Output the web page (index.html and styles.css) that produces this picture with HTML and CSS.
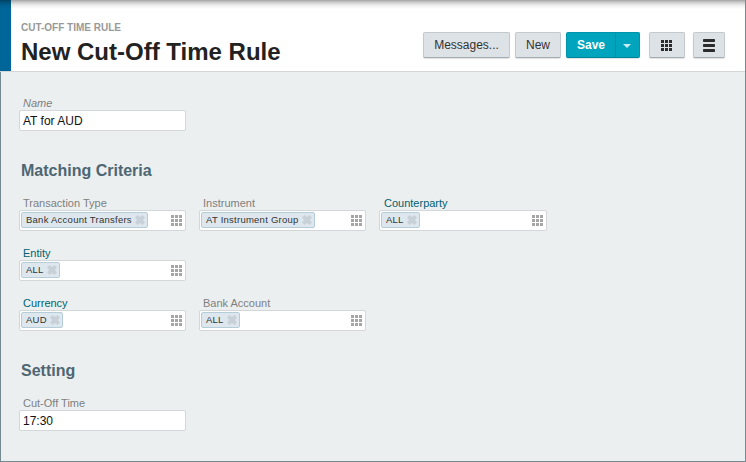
FILE: index.html
```html
<!DOCTYPE html>
<html lang="en">
<head>
<meta charset="utf-8">
<title>New Cut-Off Time Rule</title>
<link rel="stylesheet" href="styles.css">
</head>
<body>
<svg class="defs" width="0" height="0" aria-hidden="true">
  <symbol id="grid" viewBox="0 0 11 11"><path d="M0 0h3v3H0zM4 0h3v3H4zM8 0h3v3H8zM0 4h3v3H0zM4 4h3v3H4zM8 4h3v3H8zM0 8h3v3H0zM4 8h3v3H4zM8 8h3v3H8z"/></symbol>
  <symbol id="cross" viewBox="0 0 10 10"><path d="M2.6 0 5 2.1 7.4 0 10 2.6 7.9 5 10 7.4 7.4 10 5 7.9 2.6 10 0 7.4 2.1 5 0 2.6z"/></symbol>
</svg>
<div class="page">
  <header class="header">
    <div class="titles">
      <div class="kind"><span>CUT-OFF TIME RULE</span></div>
      <h1>New Cut-Off Time Rule</h1>
    </div>
    <div class="actions">
      <button class="btn messages">Messages...</button>
      <button class="btn new">New</button>
      <div class="split">
        <button class="save">Save</button>
        <button class="more" aria-label="More"><svg width="8" height="4" viewBox="0 0 8 4"><path d="M0 0h8L4 4z"/></svg></button>
      </div>
      <button class="btn tiles" aria-label="Apps"><svg width="11" height="11"><use href="#grid"/></svg></button>
      <button class="btn menu" aria-label="Menu"><svg width="12" height="13" viewBox="0 0 12 13"><rect width="12" height="3" rx=".7"/><rect y="5" width="12" height="3" rx=".7"/><rect y="10" width="12" height="3" rx=".7"/></svg></button>
    </div>
  </header>
  <main class="form">
    <div class="row">
      <div class="field"><label class="italic">Name</label><div class="box text">AT for AUD</div></div>
    </div>
    <h2>Matching Criteria</h2>
    <div class="row">
      <div class="field"><label>Transaction Type</label><div class="box"><span class="chip w-type"><span>Bank Account Transfers</span><svg><use href="#cross"/></svg></span><svg class="pick"><use href="#grid"/></svg></div></div>
      <div class="field"><label>Instrument</label><div class="box"><span class="chip w-inst"><span>AT Instrument Group</span><svg><use href="#cross"/></svg></span><svg class="pick"><use href="#grid"/></svg></div></div>
      <div class="field wide"><label class="link">Counterparty</label><div class="box"><span class="chip w-all"><span>ALL</span><svg><use href="#cross"/></svg></span><svg class="pick"><use href="#grid"/></svg></div></div>
    </div>
    <div class="row">
      <div class="field"><label class="link">Entity</label><div class="box"><span class="chip w-all"><span>ALL</span><svg><use href="#cross"/></svg></span><svg class="pick"><use href="#grid"/></svg></div></div>
    </div>
    <div class="row">
      <div class="field"><label class="link">Currency</label><div class="box"><span class="chip w-aud"><span>AUD</span><svg><use href="#cross"/></svg></span><svg class="pick"><use href="#grid"/></svg></div></div>
      <div class="field"><label>Bank Account</label><div class="box"><span class="chip w-all"><span>ALL</span><svg><use href="#cross"/></svg></span><svg class="pick"><use href="#grid"/></svg></div></div>
    </div>
    <h2>Setting</h2>
    <div class="row">
      <div class="field"><label>Cut-Off Time</label><div class="box text">17:30</div></div>
    </div>
  </main>
</div>
</body>
</html>
```
FILE: styles.css
```css
* { box-sizing: border-box; }
body { margin: 0; font-family: "Liberation Sans", Arial, sans-serif; }
button { font: inherit; margin: 0; padding: 0; }
svg { display: block; flex: none; }
.defs { position: absolute; }
.page {
  width: 746px; height: 462px;
  background: #ebeff0;
  border: 1px solid #758991; border-top: 0;
  display: flex; flex-direction: column;
}
.header {
  height: 72px; margin-left: -1px; padding: 0 20px 0 10px;
  display: flex; justify-content: space-between;
  background: linear-gradient(rgba(0,0,0,.36), rgba(0,0,0,.22) 2px, rgba(0,0,0,.08) 5px, transparent 9px), linear-gradient(90deg, #006699 11px, #fff 11px);
  border-bottom: 1px solid #d2d6d8;
}
.titles { padding: 21px 0 0 11px; white-space: nowrap; }
.kind { font-size: 10px; line-height: 14px; font-weight: bold; color: #999; }
h1 { margin: 3px 0 0; font-size: 24px; line-height: 28px; color: #222; }
.actions { display: flex; padding-top: 32px; font-size: 12px; line-height: 15px; }
.btn {
  height: 26px; border: 1px solid #c3c9cd; border-bottom-color: #a4abb0; border-radius: 2px;
  background: #dde2e6; color: #333; fill: #2c2c2c;
  box-shadow: 0 1px 1px rgba(0,0,0,.12);
  display: flex; justify-content: center; align-items: center;
}
.messages { width: 87px; margin-right: 5px; }
.new { width: 46px; margin-right: 5px; }
.tiles { width: 36px; margin: 0 8px 0 9px; padding: 1px 1px 0 0; }
.menu { width: 32px; padding-top: 1px; }
.split {
  width: 74px; height: 26px; display: flex;
  border: 1px solid #0095ad; border-bottom-color: #008399; border-radius: 2px;
  background: #00a5bd; box-shadow: 0 1px 1px rgba(0,0,0,.12);
}
.save, .more { border: 0; background: none; color: #fff; }
.save { width: 48px; font-weight: bold; }
.more { width: 24px; border-left: 1px solid #0091a8; fill: #c9edf2; display: flex; align-items: center; justify-content: center; padding: 2px 1px 0 0; }
.form { padding: 25px 0 0 18px; }
.row { display: flex; gap: 13px; height: 50px; }
.field { width: 167px; }
.field.wide { width: 168px; }
label { display: block; height: 13px; line-height: 13px; padding-left: 4px; font-size: 11px; color: #808080; white-space: nowrap; }
.italic { font-style: italic; }
.link { color: #00626f; }
.wide label { padding-left: 5px; }
.box {
  height: 21px; border: 1px solid #d3d7d9; border-radius: 2px; background: #fff;
  padding: 0 3px 0 1px; display: flex; justify-content: space-between; align-items: center;
}
.text { padding-left: 3px; font-size: 12px; color: #111; }
.chip {
  height: 16px; margin-bottom: 1px; padding: 0 2px 0 4px; border: 1px solid #b4cdd9; border-radius: 2px; background: #dde7ed;
  display: flex; justify-content: space-between; align-items: center;
  font-size: 9.5px; letter-spacing: .25px; line-height: 14px; color: #333; white-space: nowrap;
}
.chip svg { width: 10px; height: 10px; fill: #c8d1d7; }
.w-type { width: 127px; }
.w-inst { width: 114px; }
.w-all { width: 39px; }
.w-aud { width: 42px; }
.pick { width: 11px; height: 11px; fill: #a5a5a5; }
h2 { margin: 12px 0 14px; height: 24px; line-height: 24px; padding-left: 2px; font-size: 16px; color: #4e6673; }
```
